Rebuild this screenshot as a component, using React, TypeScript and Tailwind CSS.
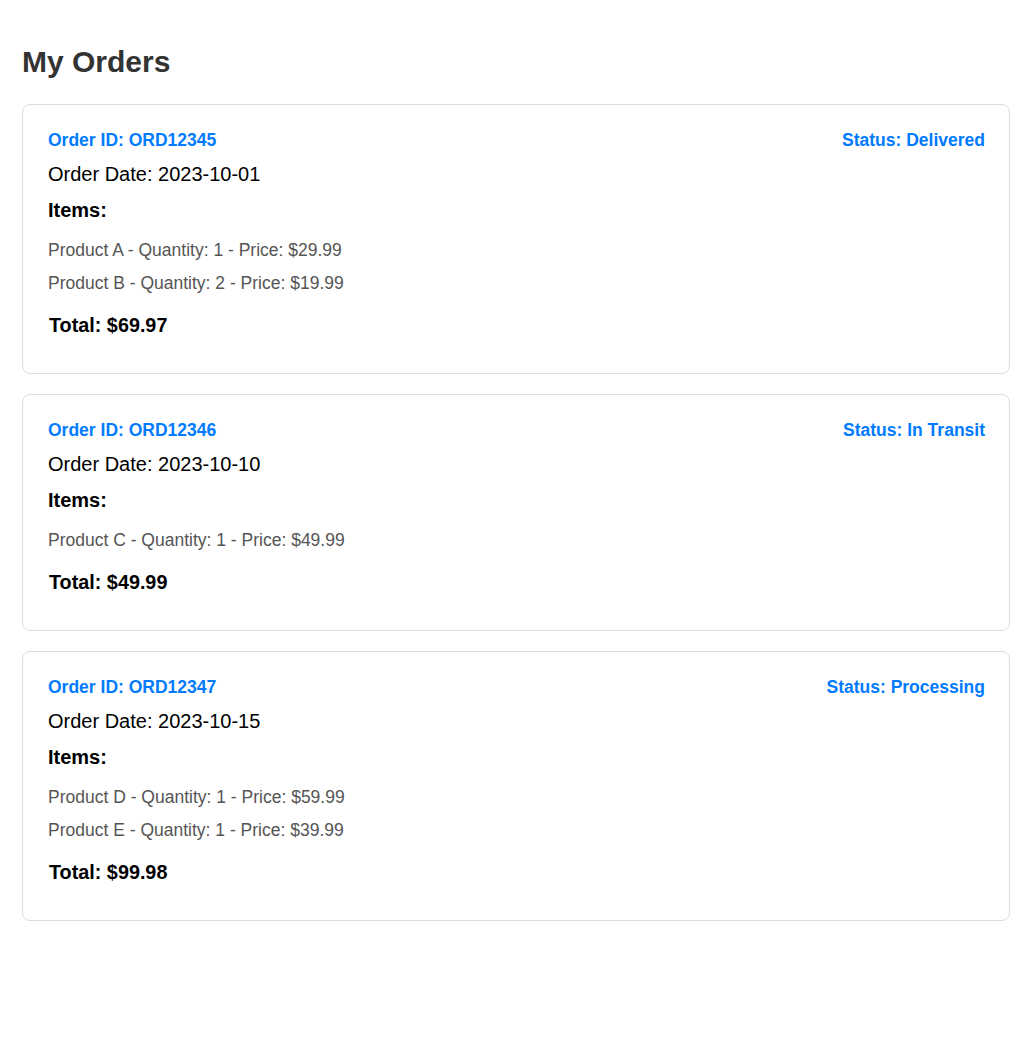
import React from "react";

type Item = { name: string; qty: number; price: string };
type Order = { id: string; date: string; status: string; items: Item[]; total: string };

const orders: Order[] = [
  {
    id: "ORD12345",
    date: "2023-10-01",
    status: "Delivered",
    items: [
      { name: "Product A", qty: 1, price: "29.99" },
      { name: "Product B", qty: 2, price: "19.99" },
    ],
    total: "69.97",
  },
  {
    id: "ORD12346",
    date: "2023-10-10",
    status: "In Transit",
    items: [{ name: "Product C", qty: 1, price: "49.99" }],
    total: "49.99",
  },
  {
    id: "ORD12347",
    date: "2023-10-15",
    status: "Processing",
    items: [
      { name: "Product D", qty: 1, price: "59.99" },
      { name: "Product E", qty: 1, price: "39.99" },
    ],
    total: "99.98",
  },
];

function OrderCard({ order }: { order: Order }) {
  return (
    <div className="rounded-lg border border-[#dddddd] bg-white pl-[25px] pr-6 pt-[25px] pb-[36px]">
      <div className="flex items-center justify-between text-[17.5px] font-bold leading-[20px] text-[#007bff]">
        <span>Order ID: {order.id}</span>
        <span>Status: {order.status}</span>
      </div>
      <p className="mt-[12px] text-[20px] leading-[24px] text-black">Order Date: {order.date}</p>
      <h3 className="mt-[12px] text-[20px] font-bold leading-[24px] text-black">Items:</h3>
      <ul className="mt-[12px]">
        {order.items.map((it) => (
          <li key={it.name} className="text-[17.5px] leading-[33px] text-[#555555]">
            {it.name} - Quantity: {it.qty} - Price: ${it.price}
          </li>
        ))}
      </ul>
      <p className="mt-[13px] pl-[1px] text-[19.8px] font-bold leading-[24px] text-black">Total: ${order.total}</p>
    </div>
  );
}

export default function App() {
  return (
    <div className="min-h-screen bg-white px-[22px] pt-[44px] font-['Liberation_Sans',Arial,sans-serif]">
      <h1 className="mb-6 text-[30px] font-bold leading-[36px] text-[#333333]">My Orders</h1>
      <div className="flex flex-col gap-5">
        {orders.map((o) => (
          <OrderCard key={o.id} order={o} />
        ))}
      </div>
    </div>
  );
}
